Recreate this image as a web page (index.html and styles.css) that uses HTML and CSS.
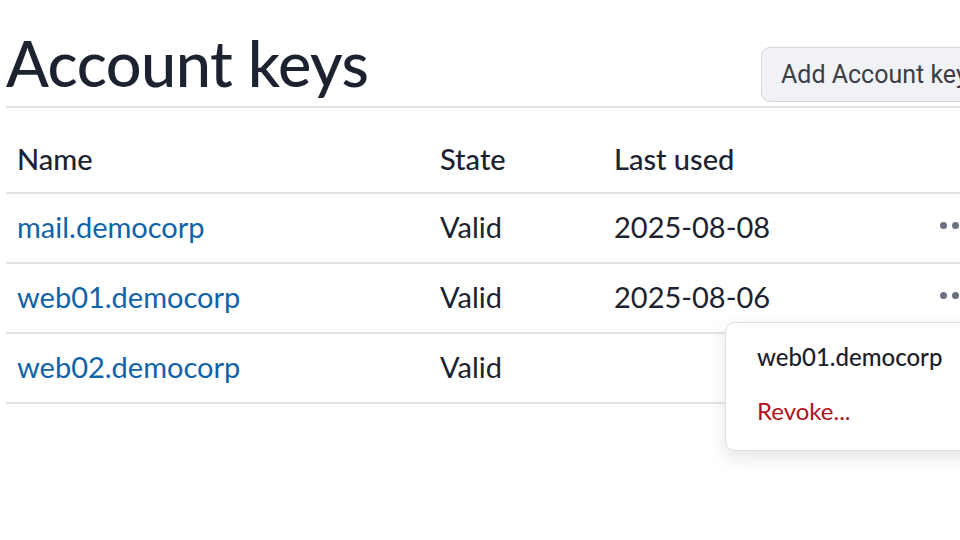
FILE: index.html
```html
<!DOCTYPE html>
<html lang="en">
<head>
    <meta charset="UTF-8">
    <title>Account keys</title>
    <link rel="stylesheet" href="styles.css">
</head>
<body>

<div class="page">

    <!-- Title bar -->
    <div class="title-bar">
        <h1>Account keys</h1>
        <button class="btn">Add Account key</button>
    </div>

    <!-- Keys table -->
    <table class="keys">
        <thead>
            <tr>
                <th class="col-name">Name</th>
                <th class="col-state">State</th>
                <th class="col-used">Last used</th>
                <th class="col-actions"></th>
            </tr>
        </thead>
        <tbody>
            <tr>
                <td><a href="#">mail.democorp</a></td>
                <td>Valid</td>
                <td>2025-08-08</td>
                <td class="actions"><span class="kebab"><i></i><i></i><i></i></span></td>
            </tr>
            <tr>
                <td><a href="#">web01.democorp</a></td>
                <td>Valid</td>
                <td>2025-08-06</td>
                <td class="actions">
                    <span class="kebab"><i></i><i></i><i></i></span>
                    <div class="menu">
                        <div class="menu-title">web01.democorp</div>
                        <div class="menu-item danger">Revoke...</div>
                    </div>
                </td>
            </tr>
            <tr>
                <td><a href="#">web02.democorp</a></td>
                <td>Valid</td>
                <td></td>
                <td class="actions"></td>
            </tr>
        </tbody>
    </table>

</div>

</body>
</html>
```

FILE: styles.css
```css
html, body { margin: 0; }
body { font-family: Lato, "Noto Sans", sans-serif; background: #fff; color: #1c2230; }
.page { width: 1040px; height: 540px; padding-left: 6px; overflow: hidden; }

.title-bar { display: flex; justify-content: space-between; align-items: flex-end; height: 106px; border-bottom: 2px solid #e2e3e8; }
h1 { margin: 0 0 12px 0; font-size: 63px; font-weight: 500; line-height: 1; letter-spacing: -0.5px; }
.btn { margin: 0 0 4px 0; height: 55px; padding: 0 19px; width: 285px; text-align: left; font-family: Roboto, sans-serif; font-size: 25px; color: #3b3e46; background: #f1f2f6; border: 1.5px solid #d3d5db; border-radius: 9px; }

.keys { border-collapse: collapse; width: 1034px; table-layout: fixed; }
.keys th, .keys td { box-sizing: border-box; text-align: left; padding: 0 11px; font-size: 29px; border-bottom: 2px solid #e2e3e8; }
.keys th { height: 85px; font-weight: 500; vertical-align: bottom; padding-bottom: 16px; }
.keys td { height: 70px; padding-bottom: 4px; font-weight: 400; }
.col-name { width: 423px; }
.col-state { width: 174px; }
.col-used { width: 316px; }
.keys a { color: #0f63a9; text-decoration: none; }

.actions { position: relative; }
.kebab { display: flex; gap: 5px; margin: -2px 0 0 10px; }
.kebab i { width: 7px; height: 7px; border-radius: 50%; background: #6b7080; }

.menu { position: absolute; left: -194px; top: 58px; width: 300px; padding: 6px 0 13px; background: #fff; border: 1.5px solid #dcdee3; border-radius: 10px; box-shadow: 0 6px 18px rgba(20, 25, 40, 0.12); z-index: 2; }
.menu-title, .menu-item { padding: 0 31px; height: 54px; display: flex; align-items: center; font-size: 24px; }
.menu-title { font-weight: 500; color: #1c2029; }
.danger { color: #b1131c; }
```
